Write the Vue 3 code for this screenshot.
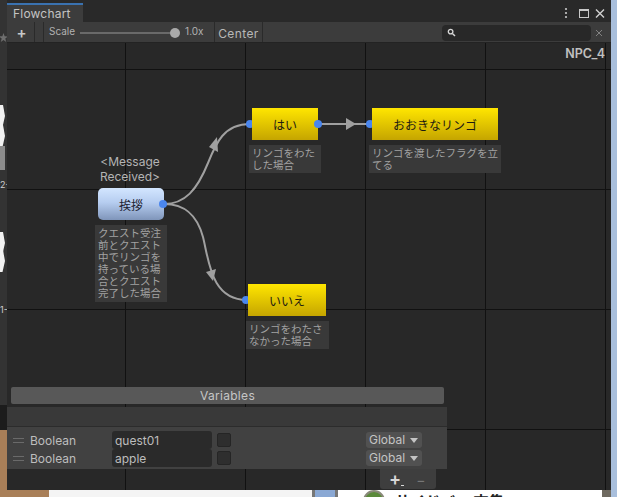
<script setup>
const nodes = [
  { id: 'hai', label: 'はい', x: 245, y: 108, w: 66, kind: 'yellow' },
  { id: 'ookina', label: 'おおきなリンゴ', x: 365, y: 108, w: 126, kind: 'yellow' },
  { id: 'iie', label: 'いいえ', x: 241, y: 284, w: 78, kind: 'yellow' },
  { id: 'aisatsu', label: '挨拶', x: 91, y: 188, w: 66, kind: 'blue' },
]

const notes = [
  { text: 'リンゴをわたした場合', x: 242, y: 145, w: 72, h: 28 },
  { text: 'リンゴを渡したフラグを立てる', x: 362, y: 145, w: 132, h: 28 },
  { text: 'リンゴをわたさなかった場合', x: 239, y: 321, w: 83, h: 28 },
  { text: 'クエスト受注前とクエスト中でリンゴを持っている場合とクエスト完了した場合', x: 88, y: 225, w: 72, h: 77 },
]

// left-hand ports sit behind their node, right-hand ones on top
const backDots = [[243, 124], [363, 124], [239, 300]]
const frontDots = [[156, 204], [311, 124]]

const variables = [
  { name: 'quest01' },
  { name: 'apple' },
]

function place(o) {
  return { left: o.x + 'px', top: o.y + 'px', width: o.w + 'px', height: o.h ? o.h + 'px' : undefined }
}

function dotStyle(d) {
  return { left: d[0] - 4 + 'px', top: d[1] - 47 + 'px' }
}
</script>

<template>
  <div class="desktop">
    <div class="backdrop-left">
      <i class="star"></i>
      <i class="shard s1"></i><i class="shard s2"></i><i class="shard s3"></i><i class="shard s4"></i>
      <i class="grey-block"></i>
      <span class="tick t2">2-</span>
      <span class="tick t1">1-</span>
      <i class="dark-block"></i>
    </div>
    <div class="backdrop-bottom">
      <div class="tan"></div>
      <div class="paper"></div>
      <div class="gap"></div>
      <div class="paper wide">
        <svg class="avatar" width="22" height="7" viewBox="0 0 22 7">
          <circle cx="11" cy="11" r="10" fill="#5b8a3a" stroke="#8a8a7a" stroke-width="2" />
        </svg>
        <span class="peek">サイドバー 文集</span>
      </div>
      <div class="edge"></div>
    </div>

    <div class="window">
      <div class="tabbar">
        <div class="tab">Flowchart</div>
        <div class="win-icons">
          <svg width="42" height="14" viewBox="0 0 42 14">
            <circle cx="2" cy="3" r="1.1" fill="#c8c8c8" />
            <circle cx="2" cy="7" r="1.1" fill="#c8c8c8" />
            <circle cx="2" cy="11" r="1.1" fill="#c8c8c8" />
            <rect x="15.5" y="3.5" width="9" height="8" fill="none" stroke="#c8c8c8" />
            <rect x="15" y="3" width="10" height="2" fill="#c8c8c8" />
            <path d="M32 3.5 L40 11.5 M40 3.5 L32 11.5" stroke="#d0d0d0" stroke-width="1.4" />
          </svg>
        </div>
      </div>

      <div class="toolbar">
        <div class="tool-btn add">+</div>
        <div class="tool-btn spacer"></div>
        <div class="scale">
          <span class="scale-label">Scale</span>
          <div class="slider"><i></i></div>
          <span class="scale-label value">1.0x</span>
        </div>
        <div class="tool-btn center">Center</div>
        <div class="search-wrap">
          <div class="search">
            <svg width="9" height="9" viewBox="0 0 9 9">
              <circle cx="3.6" cy="3.6" r="2.3" fill="none" stroke="#d8d8d8" stroke-width="1.3" />
              <path d="M5.4 5.4 L8 8" stroke="#d8d8d8" stroke-width="1.4" />
            </svg>
          </div>
          <svg width="8" height="8" viewBox="0 0 8 8">
            <path d="M1 1 L7 7 M7 1 L1 7" stroke="#8a8a8a" stroke-width="0.9" />
          </svg>
        </div>
      </div>

      <div class="canvas">
        <div class="npc">NPC_4</div>

        <svg class="edges" width="604" height="447" viewBox="0 0 604 447">
          <g fill="none" stroke="#a0a0a0" stroke-width="2">
            <path d="M157 161 C178 161 190 147 201 120 C209 100 217 81 243 81" />
            <path d="M157 161 C178 161 190 172 196 194 C202 218 204 257 240 257" />
            <path d="M311 81 L364 81" />
          </g>
          <g fill="#a0a0a0">
            <polygon points="210,94 202,104 211,109" />
            <polygon points="199,229 209,226 206,238" />
            <polygon points="339,75 349,81 339,87" />
          </g>
        </svg>

        <i v-for="(d, i) in backDots" :key="'b' + i" class="dot" :style="dotStyle(d)"></i>

        <div class="msg-label">&lt;Message<br />Received&gt;</div>

        <div
          v-for="n in nodes"
          :key="n.id"
          class="node"
          :class="n.kind"
          :style="{ left: n.x + 'px', top: n.y - 43 + 'px', width: n.w + 'px' }"
        >{{ n.label }}</div>

        <i v-for="(d, i) in frontDots" :key="'f' + i" class="dot" :style="dotStyle(d)"></i>

        <div
          v-for="n in notes"
          :key="n.text"
          class="note"
          :style="place({ ...n, y: n.y - 43 })"
        >{{ n.text }}</div>

        <div class="vars">
          <div class="vars-title">Variables</div>
          <div class="vars-head"></div>
          <div class="vars-rows">
            <div v-for="v in variables" :key="v.name" class="var-row">
              <span class="grip"></span>
              <span class="var-type">Boolean</span>
              <span class="var-name">{{ v.name }}</span>
              <span class="var-check"></span>
              <span class="var-scope">Global<i></i></span>
            </div>
          </div>
          <div class="vars-foot">
            <div class="foot-tab">
              <span class="plus">+<i></i></span>
              <span class="minus">−</span>
            </div>
          </div>
        </div>
      </div>
    </div>
  </div>
</template>

<style>
body {
  margin: 0;
  background: #a9bfdc;
}
</style>

<style scoped>
.desktop {
  position: relative;
  width: 617px;
  height: 497px;
  overflow: hidden;
  background: #a9bfdc;
  font-family: Inter, "Noto Sans CJK JP", sans-serif;
}

.backdrop-left {
  position: absolute;
  left: 0;
  top: 0;
  width: 8px;
  height: 497px;
  background: #333;
}
.star {
  position: absolute;
  left: -1px;
  top: 33px;
  width: 9px;
  height: 9px;
  background: #6e6e6e;
  clip-path: polygon(50% 0, 63% 35%, 100% 38%, 70% 60%, 80% 100%, 50% 78%, 20% 100%, 30% 60%, 0 38%, 37% 35%);
}
.shard {
  position: absolute;
  left: 0;
  width: 5px;
  height: 22px;
  background: #f2f2f2;
  clip-path: polygon(0 0, 60% 0, 100% 50%, 50% 100%, 0 100%);
}
.s1 { top: 105px; }
.s2 { top: 125px; }
.s3 { top: 232px; }
.s4 { top: 250px; }
.grey-block {
  position: absolute;
  left: 0;
  top: 146px;
  width: 5px;
  height: 24px;
  background: #8c8c8c;
}
.tick {
  position: absolute;
  left: 0;
  font-size: 9px;
  color: #cfcfcf;
}
.t2 { top: 179px; }
.t1 { top: 304px; }
.dark-block {
  position: absolute;
  left: 0;
  top: 405px;
  width: 8px;
  height: 25px;
  background: #1c1c1c;
}

.backdrop-bottom {
  position: absolute;
  left: 0;
  right: 0;
  top: 430px;
  bottom: 0;
  display: flex;
  align-items: flex-end;
}
.tan {
  width: 49px;
  height: 100%;
  background: #a97f58;
}
.paper {
  width: 263px;
  height: 7px;
  background: #f4f4f4;
  position: relative;
  overflow: hidden;
}
.gap {
  width: 26px;
  height: 7px;
  background: #8aa8d4;
  border-left: 3px solid #777;
  border-right: 3px solid #777;
  box-sizing: border-box;
}
.paper.wide {
  width: 264px;
  background: #fff;
}
.avatar {
  position: absolute;
  left: 25px;
  top: 0;
}
.peek {
  position: absolute;
  left: 57px;
  top: 0;
  font-size: 15px;
  font-weight: 700;
  color: #222;
  white-space: nowrap;
}
.edge {
  width: 9px;
  height: 7px;
  background: #6f6a60;
}

.window {
  position: absolute;
  left: 7px;
  top: 0;
  width: 604px;
  height: 490px;
  display: flex;
  flex-direction: column;
  background: #282828;
}

.tabbar {
  height: 22px;
  display: flex;
  justify-content: space-between;
  background: #292929;
  flex: none;
}
.tab {
  width: 76px;
  height: 19px;
  margin-top: 3px;
  box-sizing: border-box;
  border-top: 2px solid #3a72b0;
  background: #3c3c3c;
  color: #c4c4c4;
  font-size: 12px;
  line-height: 18px;
  padding-left: 6px;
  letter-spacing: 0.2px;
}
.win-icons {
  padding: 4px 5px 0 0;
}

.toolbar {
  height: 21px;
  flex: none;
  display: flex;
  align-items: stretch;
  background: #3c3c3c;
  border-bottom: 1px solid #232323;
  box-sizing: border-box;
  color: #bdbdbd;
}
.tool-btn {
  box-sizing: border-box;
  border-right: 1px solid #2a2a2a;
  display: flex;
  align-items: center;
  justify-content: center;
}
.add {
  width: 28px;
  padding-left: 2px;
  font-size: 15px;
  font-weight: 600;
  color: #c8c8c8;
}
.spacer {
  width: 9px;
}
.scale {
  width: 171px;
  display: flex;
  align-items: center;
  gap: 5px;
  padding: 1px 0 0 5px;
  box-sizing: border-box;
  border-right: 1px solid #2a2a2a;
}
.scale-label {
  font-size: 10px;
  color: #b2b2b2;
  margin-top: -3px;
}
.slider {
  position: relative;
  width: 96px;
  height: 2px;
  background: #6a6a6a;
}
.slider i {
  position: absolute;
  right: -4px;
  top: -4px;
  width: 10px;
  height: 10px;
  border-radius: 50%;
  background: #a9a9a9;
}
.value {
  margin-left: 4px;
}
.center {
  width: 48px;
  padding-top: 2px;
  font-size: 12px;
  color: #b8b8b8;
  letter-spacing: 0.4px;
}
.search-wrap {
  margin-left: auto;
  display: flex;
  align-items: center;
  gap: 4px;
  padding: 1px 8px 0 0;
}
.search {
  width: 149px;
  height: 16px;
  border-radius: 4px;
  background: #282828;
  display: flex;
  align-items: center;
  padding-left: 5px;
  box-sizing: border-box;
}

.canvas {
  position: relative;
  flex: 1;
  overflow: hidden;
  background-color: #282828;
  background-image:
    linear-gradient(to right, #111 1px, transparent 1px),
    linear-gradient(to bottom, #111 1px, transparent 1px);
  background-size: 120px 120px;
  background-position: -2px 26px;
}

.npc {
  position: absolute;
  right: 6px;
  top: 3px;
  font-size: 12.5px;
  font-weight: 600;
  color: #c0c0c0;
}

.edges {
  position: absolute;
  left: 0;
  top: 0;
}

.dot {
  position: absolute;
  width: 8px;
  height: 8px;
  border-radius: 50%;
  background: #4a86ee;
}

.msg-label {
  position: absolute;
  left: 78px;
  top: 111px;
  width: 90px;
  text-align: center;
  font-size: 12px;
  line-height: 15px;
  color: #b4b4b4;
}

.node {
  position: absolute;
  height: 32px;
  display: flex;
  align-items: center;
  justify-content: center;
  font-size: 12px;
  color: #1c1a12;
}
.yellow {
  background: linear-gradient(to bottom, #ffe600, #c5a500);
}
.blue {
  border-radius: 5px;
  background: linear-gradient(to bottom, #d3e6ff, #b6cdf0 45%, #7f95ba);
  color: #1c2230;
}

.note {
  position: absolute;
  box-sizing: border-box;
  padding: 3px 3px 0;
  background: #393939;
  color: #a2a2a2;
  font-size: 10.5px;
  line-height: 12px;
  overflow: hidden;
  word-break: break-all;
}

.vars {
  position: absolute;
  left: 0;
  top: 344px;
  width: 440px;
  display: flex;
  flex-direction: column;
  color: #bdbdbd;
}
.vars-title {
  margin: 0 3px 0 4px;
  height: 17px;
  border-radius: 2px;
  background: #585858;
  font-size: 12px;
  line-height: 17px;
  text-align: center;
  letter-spacing: 0.3px;
  color: #c6c6c6;
}
.vars-head {
  margin-top: 3px;
  height: 19px;
  background: #393939;
  border-bottom: 1px solid #2c2c2c;
}
.vars-rows {
  height: 42px;
  padding-top: 4px;
  box-sizing: border-box;
  background: #414141;
  display: flex;
  flex-direction: column;
}
.var-row {
  height: 18px;
  display: flex;
  align-items: center;
  font-size: 12px;
}
.grip {
  width: 11px;
  height: 3px;
  margin-left: 6px;
  border-top: 1px solid #6a6a6a;
  border-bottom: 1px solid #6a6a6a;
}
.var-type {
  width: 82px;
  margin-left: 6px;
}
.var-name {
  width: 100px;
  height: 18px;
  border-radius: 3px;
  background: #2a2a2a;
  box-sizing: border-box;
  padding: 1px 0 0 3px;
  line-height: 17px;
}
.var-check {
  width: 14px;
  height: 14px;
  margin-left: 5px;
  border-radius: 2px;
  background: #2e2e2e;
  border: 1px solid #252525;
  box-sizing: border-box;
}
.var-scope {
  margin-left: 135px;
  width: 56px;
  height: 16px;
  box-sizing: border-box;
  border-radius: 3px;
  background: #515151;
  padding-left: 3px;
  line-height: 16px;
  display: flex;
  align-items: center;
  gap: 5px;
  color: #c4c4c4;
}
.var-scope i {
  width: 0;
  height: 0;
  border-left: 4px solid transparent;
  border-right: 4px solid transparent;
  border-top: 5px solid #c4c4c4;
}
.vars-foot {
  display: flex;
  justify-content: flex-end;
  padding-right: 11px;
}
.foot-tab {
  width: 56px;
  height: 20px;
  background: #3e3e3e;
  border-radius: 0 0 3px 3px;
  display: flex;
  align-items: center;
  padding-left: 9px;
  box-sizing: border-box;
  gap: 15px;
}
.plus {
  position: relative;
  font-size: 18px;
  font-weight: 600;
  line-height: 18px;
  color: #d8d8d8;
}
.plus i {
  position: absolute;
  right: -3px;
  bottom: 2px;
  width: 3px;
  height: 1px;
  background: #d8d8d8;
}
.minus {
  font-size: 14px;
  color: #777;
}
</style>
